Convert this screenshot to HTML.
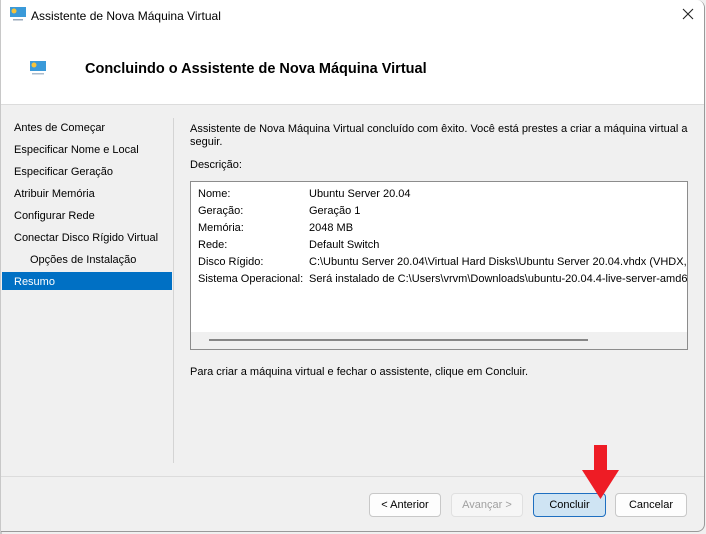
<!DOCTYPE html>
<html><head><meta charset="utf-8"><style>
*{margin:0;padding:0;box-sizing:border-box}
body{width:706px;height:534px;background:#f0f0f0;font-family:"Liberation Sans",sans-serif;font-size:11px;color:#000;position:relative;overflow:hidden}
.win{position:absolute;left:1px;top:0;width:704px;height:532px;background:#f0f0f0;border:1px solid #9a9a9a;border-top:none;border-left:none;border-radius:0 8px 8px 0;overflow:hidden}
.head{position:absolute;left:0;top:0;width:100%;height:105px;background:#fff;border-bottom:1px solid #dcdcdc}
.t{position:absolute;white-space:nowrap}
.nav div{position:absolute;left:13px;white-space:nowrap}
.btn{position:absolute;top:493px;height:24px;border:1px solid #c8c8c8;border-radius:4px;background:#fdfdfd;text-align:center;line-height:22px;font-size:11px}
</style></head><body>
<div class="t" style="left:0;top:0;width:2px;height:534px;background:#c8c8c8"></div>
<div class="win">
<div class="head">
 <svg class="t" style="left:9px;top:7px" width="16" height="14"><rect x="0" y="0" width="16" height="10" fill="#3a9ad9"/><circle cx="4" cy="4" r="2.5" fill="#f6c33a"/><rect x="3" y="12" width="10" height="1.5" fill="#9ab"/></svg>
 <div class="t" style="left:30px;top:9px;font-size:12px">Assistente de Nova Máquina Virtual</div>
 <svg class="t" style="left:681px;top:8px" width="12" height="12"><path d="M1 1L11 11M11 1L1 11" stroke="#222" stroke-width="1.1"/></svg>
 <svg class="t" style="left:29px;top:61px" width="16" height="14"><rect x="0" y="0" width="16" height="10" fill="#3a9ad9"/><circle cx="4" cy="4" r="2.5" fill="#f6c33a"/><rect x="2" y="12" width="12" height="1.5" fill="#abc"/></svg>
 <div class="t" style="left:84px;top:61px;font-size:14.5px;font-weight:bold">Concluindo o Assistente de Nova Máquina Virtual</div>
</div>
<div class="nav">
 <div style="top:122px">Antes de Começar</div>
 <div style="top:144px">Especificar Nome e Local</div>
 <div style="top:166px">Especificar Geração</div>
 <div style="top:188px">Atribuir Memória</div>
 <div style="top:210px">Configurar Rede</div>
 <div style="top:232px">Conectar Disco Rígido Virtual</div>
 <div style="top:254px;left:29px">Opções de Instalação</div>
</div>
<div class="t" style="left:1px;top:272px;width:170px;height:18px;background:#0070c4"></div>
<div class="t" style="left:13px;top:276px;color:#fff">Resumo</div>
<div class="t" style="left:172px;top:118px;width:1px;height:345px;background:#d4d4d4"></div>
<div class="t" style="left:189px;top:123px;line-height:13px">Assistente de Nova Máquina Virtual concluído com êxito. Você está prestes a criar a máquina virtual a<br>seguir.</div>
<div class="t" style="left:189px;top:159px">Descrição:</div>
<div class="t" style="left:189px;top:181px;width:498px;height:169px;background:#fff;border:1px solid #8c8c8c;overflow:hidden">
 <div class="t" style="left:7px;top:4px;line-height:17px">Nome:<br>Geração:<br>Memória:<br>Rede:<br>Disco Rígido:<br>Sistema Operacional:</div>
 <div class="t" style="left:118px;top:4px;line-height:17px">Ubuntu Server 20.04<br>Geração 1<br>2048 MB<br>Default Switch<br>C:\Ubuntu Server 20.04\Virtual Hard Disks\Ubuntu Server 20.04.vhdx (VHDX, d<br>Será instalado de C:\Users\vrvm\Downloads\ubuntu-20.04.4-live-server-amd64</div>
 <div class="t" style="left:0;top:150px;width:100%;height:18px;background:#f0f0f0"></div>
 <div class="t" style="left:18px;top:157px;width:379px;height:2px;background:#868686"></div>
</div>
<div class="t" style="left:189px;top:366px">Para criar a máquina virtual e fechar o assistente, clique em Concluir.</div>
<div class="t" style="left:0;top:476px;width:100%;height:1px;background:#dcdcdc"></div>
<div class="btn" style="left:368px;width:72px">&lt; Anterior</div>
<div class="btn" style="left:450px;width:72px;color:#a0a0a0;border-color:#e0e0e0;background:#f6f6f6">Avançar &gt;</div>
<div class="btn" style="left:532px;width:73px;background:#cfe4f3;border-color:#1f6fc0">Concluir</div>
<div class="btn" style="left:614px;width:72px">Cancelar</div>
</div>
<svg class="t" style="left:582px;top:445px" width="38" height="55"><rect x="12" y="0" width="13" height="26" fill="#ee1c25"/><polygon points="0,25 37,25 18.5,54" fill="#ee1c25"/></svg>
</body></html>
